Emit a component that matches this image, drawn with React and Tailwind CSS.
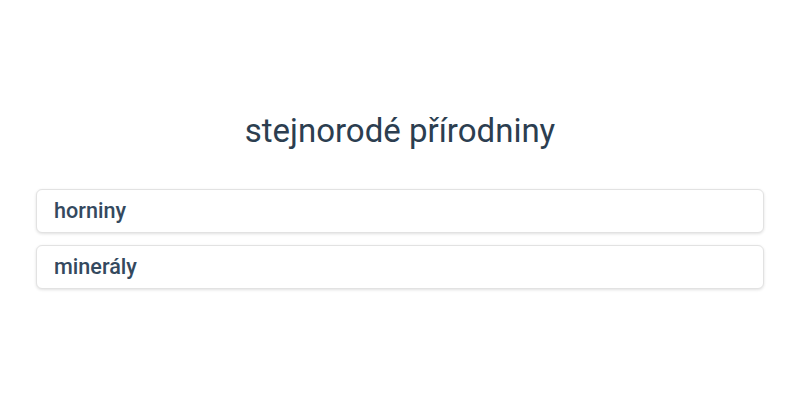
import React from 'react';

const ITEMS = ['horniny', 'minerály'];

export default function App() {
  return (
    <div className="flex min-h-[400px] w-full flex-col bg-white px-9 pt-[110px] font-['Roboto',sans-serif] text-[#2c3e50]">
      <h1 className="text-center text-[33px] font-normal leading-[42px]">stejnorodé přírodniny</h1>
      <div className="mt-[37px] flex flex-col gap-[12px]">
        {ITEMS.map((item) => (
          <div
            key={item}
            className="flex h-[44px] items-center rounded-md border border-[#e2e2e2] bg-white px-[17px] text-[21.6px] font-medium text-[#34495e] shadow-[0_1px_3px_rgba(0,0,0,0.12)]"
          >
            {item}
          </div>
        ))}
      </div>
    </div>
  );
}
